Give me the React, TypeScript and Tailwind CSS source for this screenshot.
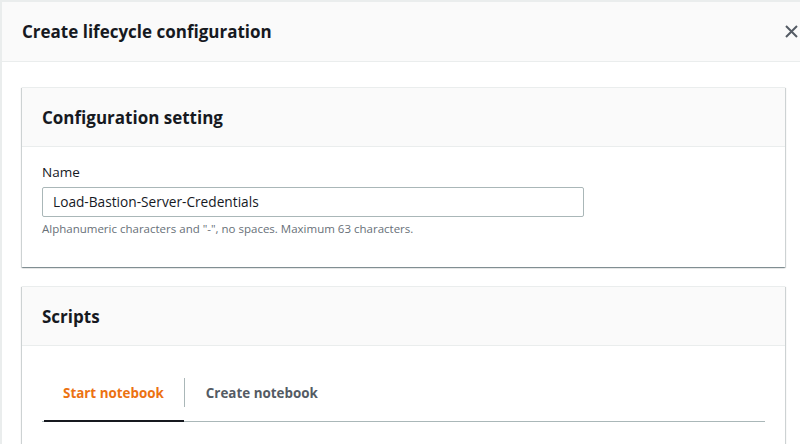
import React from "react";

export default function App() {
  const cardShadow =
    "shadow-[0_1px_1px_0_rgba(0,28,36,0.3),1px_1px_1px_0_rgba(0,28,36,0.15),-1px_1px_1px_0_rgba(0,28,36,0.15)]";
  return (
    <div
      className="w-[800px] h-[444px] overflow-hidden bg-[#eaeded] pl-[2px] pt-[2px]"
      style={{ fontFamily: '"Open Sans", "Noto Sans", sans-serif' }}
    >
      <div className="h-full bg-white flex flex-col">
        <div className="h-[60px] shrink-0 bg-[#fafafa] border-b border-[#eaeded] flex items-center justify-between pl-[20px] pr-[2px]">
          <h1 className="text-[17px] font-bold text-[#16191f] leading-none">
            Create lifecycle configuration
          </h1>
          <svg width="13" height="13" viewBox="0 0 13 13">
            <path d="M1 1 L12 12 M12 1 L1 12" stroke="#545b64" strokeWidth="2" fill="none" />
          </svg>
        </div>
        <div className="flex flex-col gap-[19px] pl-[20px] pr-[15px] pt-[25px]">
          <div className={`bg-white border-t border-[#eaeded] ${cardShadow}`}>
            <div className="h-[59px] bg-[#fafafa] border-b border-[#eaeded] flex items-center px-[20px]">
              <h2 className="text-[17px] font-bold text-[#16191f] leading-none">Configuration setting</h2>
            </div>
            <div className="px-[20px] pt-[15px] pb-[30px]">
              <div className="text-[13.5px] text-[#16191f] leading-[20px]">Name</div>
              <div className="mt-[5px] w-[542px] h-[30px] border border-[#aab7b8] rounded-[2px] flex items-center px-[10px] text-[13.7px] text-[#16191f]">
                Load-Bastion-Server-Credentials
              </div>
              <div className="mt-[4px] text-[11.5px] text-[#687078] leading-[16px]">
                Alphanumeric characters and "-", no spaces. Maximum 63 characters.
              </div>
            </div>
          </div>
          <div className={`bg-white border-t border-[#eaeded] h-[200px] ${cardShadow}`}>
            <div className="h-[59px] bg-[#fafafa] border-b border-[#eaeded] flex items-center px-[20px]">
              <h2 className="text-[17px] font-bold text-[#16191f] leading-none">Scripts</h2>
            </div>
            <div className="px-[20px] pt-[31px]">
              <div className="w-[723px] border-b border-[#aab7b8] flex items-start">
                <div className="relative h-[44px] pl-[21px] pr-[20px]">
                  <div className="h-[32px] flex items-center">
                    <span className="text-[13.4px] font-bold text-[#ec7211]">Start notebook</span>
                  </div>
                  <div className="absolute left-[2px] right-0 -bottom-[1px] h-[2px] bg-[#16191f]"></div>
                </div>
                <div className="w-px h-[29px] mt-[1px] bg-[#aab7b8]"></div>
                <div className="h-[44px] pl-[21px]">
                  <div className="h-[32px] flex items-center">
                    <span className="text-[13.4px] font-bold text-[#545b64]">Create notebook</span>
                  </div>
                </div>
              </div>
            </div>
          </div>
        </div>
      </div>
    </div>
  );
}
